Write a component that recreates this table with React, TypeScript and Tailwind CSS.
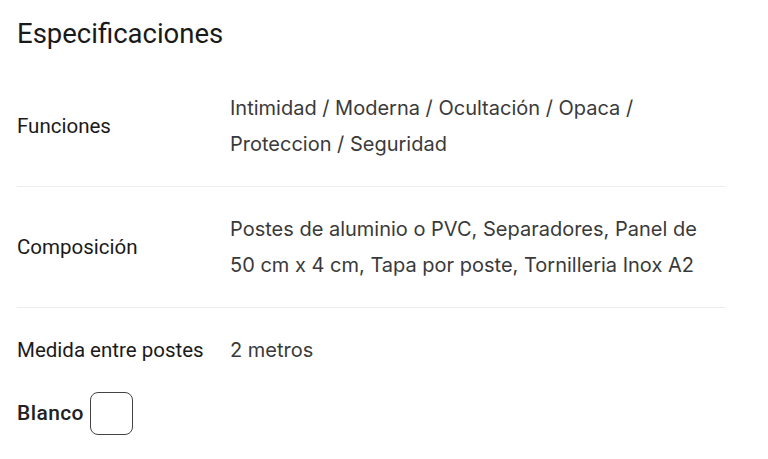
const specs = [
  {
    label: "Funciones",
    value: "Intimidad / Moderna / Ocultación / Opaca / Proteccion / Seguridad",
  },
  {
    label: "Composición",
    value:
      "Postes de aluminio o PVC, Separadores, Panel de 50 cm x 4 cm, Tapa por poste, Tornilleria Inox A2",
  },
  { label: "Medida entre postes", value: "2 metros" },
];

export default function App() {
  return (
    <div className="min-h-[459px] w-[768px] bg-white px-[17px] pt-[16px] font-['Roboto',sans-serif] text-[#1a1a1a]">
      <h2 className="text-[27.5px] leading-[36px]">Especificaciones</h2>
      <table className="mt-[14px] w-[708px] border-collapse">
        <tbody>
          {specs.map((s, i) => (
            <tr
              key={s.label}
              className={i < specs.length - 1 ? "border-b border-[#ececec]" : ""}
            >
              <td className="w-[213px] py-[24px] pr-3 align-middle text-[20.5px] leading-[36px]">
                {s.label}
              </td>
              <td className="py-[24px] pr-[6px] align-middle font-['Inter',sans-serif] text-[20px] leading-[36px] text-[#3a3a3a]">
                {s.value}
              </td>
            </tr>
          ))}
        </tbody>
      </table>
      <div className="flex items-center gap-[6px]">
        <span className="text-[21px] font-medium tracking-[0.4px] text-[#222]">Blanco</span>
        <span className="h-[43px] w-[43px] rounded-[8px] border border-[#444] bg-white" />
      </div>
    </div>
  );
}
